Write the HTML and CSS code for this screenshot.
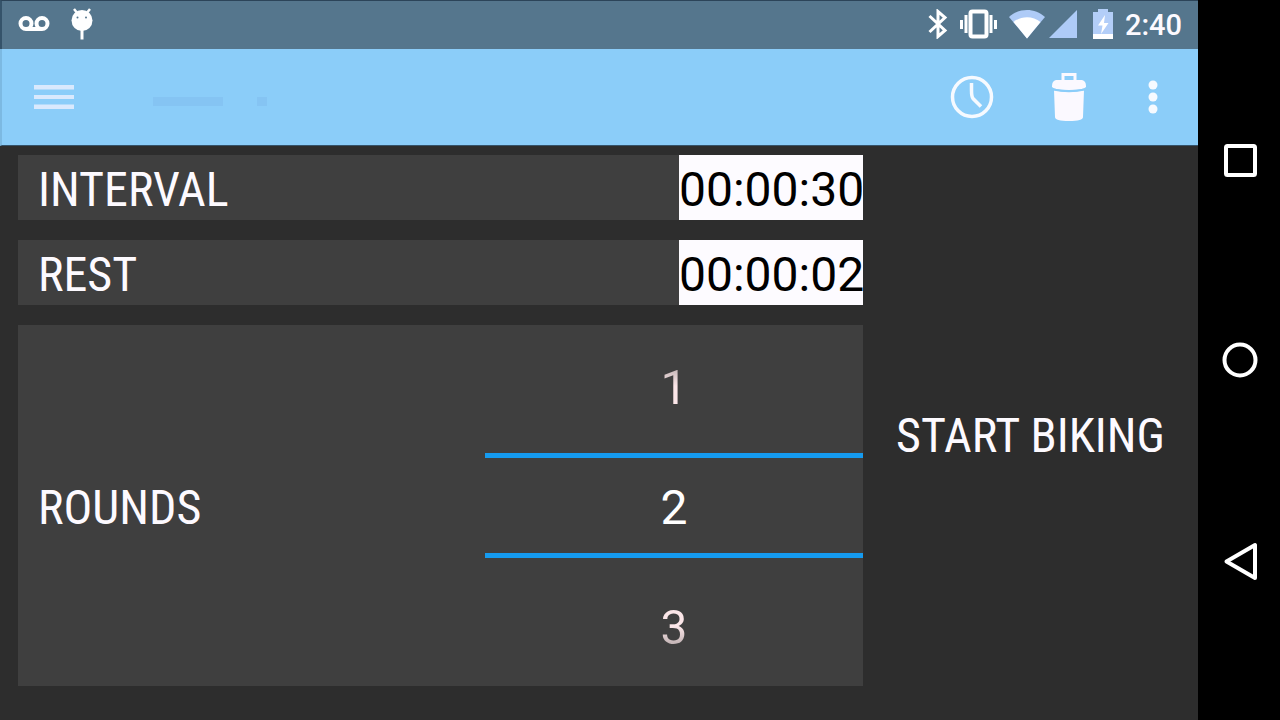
FILE: index.html
```
<!DOCTYPE html>
<html lang="en">
<head>
  <meta charset="utf-8">
  <title>Interval Timer</title>
  <link rel="stylesheet" href="styles.css">
</head>
<body>
  <div class="device">
    <div class="screen">
      <div class="status-bar">
        <div class="status-group notifications">
          <svg width="32" height="16" viewBox="0 0 32 16" fill="none" stroke="#fff" stroke-width="4">
            <circle cx="8" cy="7.500" r="5.500"/>
            <circle cx="24" cy="7.500" r="5.500"/>
            <path d="M8 13h16"/>
          </svg>
          <svg width="22" height="32" viewBox="0 0 22 32">
            <path d="M3 1l4 5M19 1l-4 5" stroke="#fff" stroke-width="2.500"/>
            <circle cx="11" cy="12.500" r="10.500" fill="#fff"/>
            <path d="M11 22v9.500" stroke="#fff" stroke-width="3"/>
            <circle cx="6.500" cy="9.500" r="1" fill="#55768d"/>
            <circle cx="15" cy="9.500" r="1" fill="#55768d"/>
          </svg>
        </div>
        <div class="status-group system">
          <svg class="bluetooth" width="20" height="30" viewBox="0 0 20 30" fill="none" stroke="#fff" stroke-width="3">
            <path d="M1.500 7l15.500 14.500-7 6V2.500l7 6L1.500 23"/>
          </svg>
          <svg class="vibrate" width="37" height="30" viewBox="0 0 37 30" fill="none" stroke="#fff">
            <rect x="10.500" y="2.500" width="16" height="25" rx="2" stroke-width="4"/>
            <path d="M6 6v18M31 6v18M1.500 11v9M35.500 11v9" stroke-width="3"/>
          </svg>
          <svg class="wifi" width="36" height="30" viewBox="0 0 36 30">
            <path d="M0 8C10-1.500 26-1.500 36 8L18 29.500z" fill="#aecbf7"/>
            <path d="M4.500 13C12 6.500 24 6.500 31.500 13L18 29.500z" fill="#fff"/>
          </svg>
          <svg class="signal" width="28" height="30" viewBox="0 0 28 30">
            <path d="M28 1v28H0z" fill="#aecbf7"/>
          </svg>
          <svg class="battery" width="20" height="30" viewBox="0 0 20 30">
            <path d="M5 0h10v3h5v27H0V3h5z" fill="#b3cef8"/>
            <path d="M0 25h20v5H0z" fill="#fff"/>
            <path d="M12 6L5 16.500h4.500L8 25l7.500-11H11z" fill="#fff"/>
          </svg>
          <time class="clock">2:40</time>
        </div>
      </div>

      <header class="app-bar">
        <button class="icon-button" aria-label="Menu">
          <svg width="42" height="26" viewBox="0 0 42 26" fill="#d9e9fd">
            <path d="M1 1h40v4.500H1zM1 11h40v4H1zM1 20.500h40V25H1z"/>
          </svg>
        </button>
        <div class="title-placeholder"><span class="long"></span><span class="short"></span></div>
        <div class="actions">
          <button class="icon-button" aria-label="History">
            <svg width="44" height="44" viewBox="0 0 44 44" fill="none" stroke="#f6faff">
              <circle cx="22" cy="22" r="19.500" stroke-width="3.500"/>
              <path d="M21.500 8v7.500q0 6 1.500 8l8 8" stroke-width="3.500"/>
            </svg>
          </button>
          <button class="icon-button" aria-label="Delete">
            <svg width="36" height="50" viewBox="0 0 36 50" fill="#fbf9ff">
              <path d="M12 9V2.500h12V9" fill="none" stroke="#fbf9ff" stroke-width="3"/>
              <path d="M5 8h26q4 1 4 6v1q-2 3-17 3T1 15v-1q0-5 4-6z"/>
              <path d="M3 18q15 4 30 0l-1 27q0 4-14 4T4 45z"/>
              <path d="M2 17.500q16 3.500 32 0" fill="none" stroke="#8bcdf9" stroke-width="2"/>
            </svg>
          </button>
          <button class="icon-button" aria-label="More options">
            <svg width="10" height="36" viewBox="0 0 10 36" fill="#f6faff">
              <circle cx="5" cy="6" r="4.500"/>
              <circle cx="5" cy="18" r="4.500"/>
              <circle cx="5" cy="30" r="4.500"/>
            </svg>
          </button>
        </div>
      </header>

      <main class="workout">
        <div class="settings">
          <div class="setting">
            <label for="interval">INTERVAL</label>
            <input class="duration" type="text" id="interval" value="00:00:30">
          </div>
          <div class="setting">
            <label for="rest">REST</label>
            <input class="duration" type="text" id="rest" value="00:00:02">
          </div>
          <div class="setting rounds">
            <label for="rounds">ROUNDS</label>
            <div class="picker">
              <button class="picker-previous">1</button>
              <input class="picker-value" type="text" id="rounds" value="2">
              <button class="picker-next">3</button>
            </div>
          </div>
        </div>
        <button class="start">START BIKING</button>
      </main>
    </div>

    <nav class="nav-bar">
      <button class="icon-button" aria-label="Overview">
        <svg width="36" height="36" viewBox="0 0 36 36" fill="none" stroke="#fff">
          <rect x="4" y="3" width="29" height="29" rx="1.500" stroke-width="4"/>
        </svg>
      </button>
      <button class="icon-button" aria-label="Home">
        <svg width="36" height="36" viewBox="0 0 36 36" fill="none" stroke="#fff">
          <circle cx="18" cy="18" r="15.500" stroke-width="4"/>
        </svg>
      </button>
      <button class="icon-button" aria-label="Back">
        <svg width="36" height="40" viewBox="0 0 36 40" fill="none" stroke="#fff">
          <path d="M33 4v33L4.500 20.500z" stroke-width="4" stroke-linejoin="round"/>
        </svg>
      </button>
    </nav>
  </div>
</body>
</html>
```
FILE: styles.css
```
* {
  box-sizing: border-box;
}

body {
  margin: 0;
  background-color: #000;
  color: #fdfaff;
  font-family: Roboto, sans-serif;
}

button,
input {
  margin: 0;
  padding: 0;
  border: none;
  border-radius: 0;
  background: none;
  color: inherit;
  font: inherit;
}

button {
  cursor: pointer;
}

svg {
  display: block;
}

.device {
  display: flex;
  min-height: 100vh;
}

.screen {
  flex: 1;
  display: flex;
  flex-direction: column;
  background-color: #2d2d2d;
}

/* Status bar */
.status-bar {
  display: flex;
  justify-content: space-between;
  align-items: center;
  height: 49px;
  padding: 0 16px 2px;
  border-top: 1px solid #2c4459;
  border-left: 2px solid #35536a;
  background-color: #55768d;
}

.status-group {
  display: flex;
  align-items: center;
}

.notifications {
  gap: 21px;
}

.system {
  gap: 12px;
}

.signal {
  margin-left: -8px;
}

.battery {
  margin-left: 4px;
}

.clock {
  padding-top: 2px;
  font-size: 29px;
  font-weight: 500;
  line-height: 32px;
}

/* App bar */
.app-bar {
  display: flex;
  align-items: center;
  height: 97px;
  padding: 0 40px 0 31px;
  border-left: 2px solid #7cb9e2;
  border-bottom: 1px solid #35536a;
  background-color: #8bcdf9;
}

.title-placeholder {
  flex: 1;
  display: flex;
  gap: 34px;
  margin-left: 78px;
  padding-top: 8px;
}

.title-placeholder span {
  height: 9px;
  background-color: #85c4f3;
}

.title-placeholder .long {
  width: 70px;
}

.title-placeholder .short {
  width: 10px;
}

.actions {
  display: flex;
  align-items: center;
  gap: 57px;
}

.actions .icon-button:last-child {
  margin-left: 4px;
}

/* Workout settings */
.workout {
  flex: 1;
  display: grid;
  grid-template-columns: minmax(0, 1fr) 335px;
  padding-left: 18px;
  font-size: 48px;
}

.settings {
  display: flex;
  flex-direction: column;
  gap: 20px;
  padding: 9px 0 34px;
}

.setting {
  display: flex;
  align-items: center;
  justify-content: space-between;
  height: 65px;
  padding-left: 20px;
  background-color: #3f3f3f;
}

.setting label,
.start {
  font-family: "Roboto Condensed", "Liberation Sans Narrow", Roboto, sans-serif;
}

.setting label,
.start,
.duration,
.picker-previous,
.picker-value,
.picker-next {
  padding-top: 4px;
}

.duration {
  width: 184px;
  height: 65px;
  background-color: #fdfbff;
  color: #000;
  text-align: center;
}

.rounds {
  flex: 1;
  height: auto;
}

.picker {
  display: grid;
  grid-template-rows: repeat(3, 120px);
  width: 378px;
}

.picker-value {
  align-self: center;
  width: 100%;
  height: 105px;
  border-top: 5px solid #159bf0;
  border-bottom: 5px solid #159bf0;
  color: #fff;
  text-align: center;
}

.picker-previous,
.picker-next {
  background-clip: text;
  -webkit-background-clip: text;
  color: transparent;
}

.picker-previous {
  background-image: linear-gradient(to bottom, #3f3f3f, #fbe6e8 50%);
}

.picker-next {
  background-image: linear-gradient(to top, #3f3f3f, #fbe6e8 50%);
}

/* Navigation bar */
.nav-bar {
  display: flex;
  flex-direction: column;
  align-items: center;
  justify-content: space-around;
  width: 82px;
  padding: 62px 0 58px 2px;
  background-color: #000;
}
```
